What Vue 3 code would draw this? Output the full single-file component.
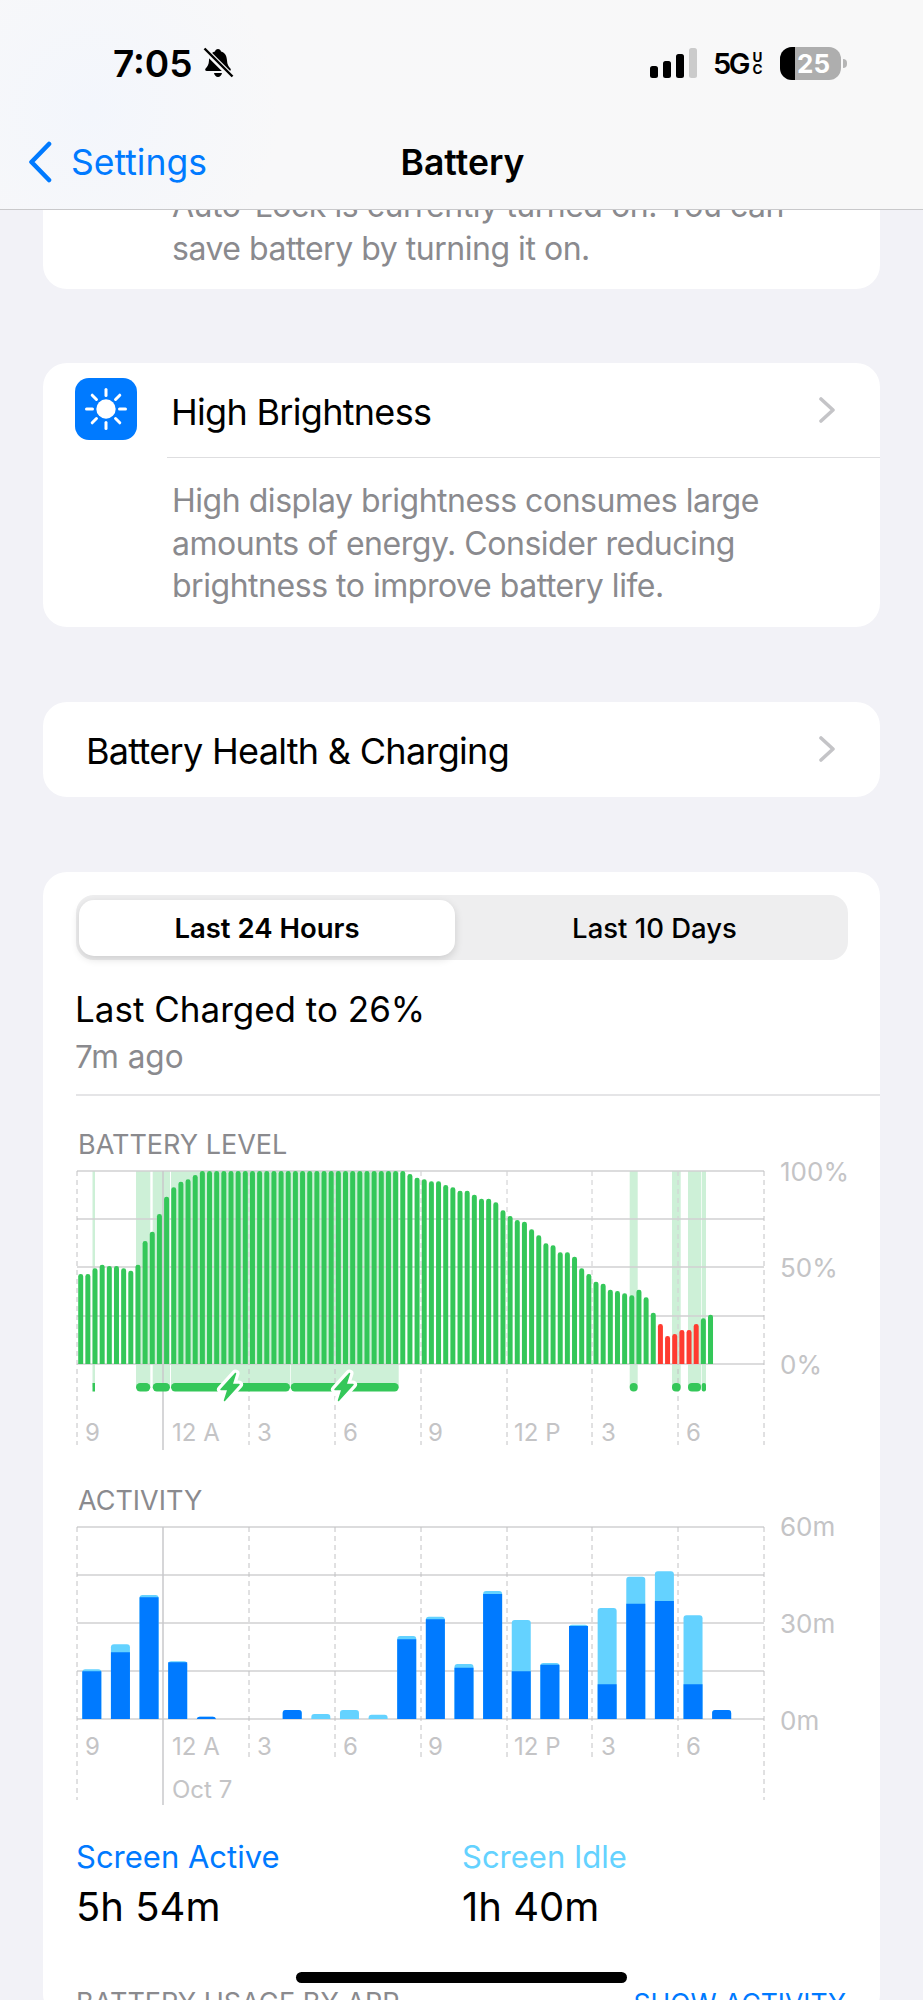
<script setup>
const levelTops = [492,492,475,464,468,468,475,482,464,393,365,312,260,232,215,208,195,
  ...Array(29).fill(183),192,203,208,214,214,225,232,242,242,254,266,266,277,301,318,330,335,358,376,400,406,427,427,440,475,492,515,521,539,543,550,556,539,562,608,642,678,672,660,660,642,625,614]
const chartFloor = 1364

function topRound(x, y, w, h, r) {
  return `M${x} ${y + h}V${y + r}Q${x} ${y} ${x + r} ${y}H${x + w - r}Q${x + w} ${y} ${x + w} ${y + r}V${y + h}Z`
}

const levelBars = levelTops.map((top, i) => {
  const y = 1110 + top / 3
  return {
    d: topRound(78.2 + i * 7.157, y, 5, chartFloor - y, 2.4),
    color: i >= 81 && i <= 86 ? '#ff3b30' : '#34c759'
  }
})

// charging stretches, x from / x to in page pixels
const bands = [[92.5, 95], [136, 150.3], [152.7, 170], [171, 290], [290.7, 398.7], [629.7, 637.7], [672, 680.7], [688, 701], [701.7, 706]]

const batteryRows = [1171, 1219, 1267, 1316, 1364]
const activityRows = [1527, 1575, 1623, 1671, 1719]
const dashed = [249, 335, 421, 507, 592, 678]

const hourLabels = [
  { x: 85, text: '9' }, { x: 172, text: '12 A' }, { x: 257, text: '3' }, { x: 343, text: '6' },
  { x: 428, text: '9' }, { x: 514, text: '12 P' }, { x: 601, text: '3' }, { x: 686, text: '6' }
]

// total top, active top (same scale as the crop), null = nothing that hour
const activity = [[598,604],[523,547],[375,382],[574,577],[740,740],null,null,[720,720],[732,748],[720,748],[734,748],[498,508],[440,448],[582,593],[363,372],[450,604],[579,584],[464,468],[414,643],[320,401],[304,393],[436,643],[720,720]]

const activityBars = activity.map((item, i) => {
  if (!item) return null
  const x = 82.3 + i * 28.63
  const totalY = 1470 + item[0] / 3
  const activeY = 1470 + item[1] / 3
  return {
    idle: topRound(x, totalY, 19, 1719 - totalY, 3),
    active: item[1] < 748 ? topRound(x, activeY, 19, 1719 - activeY, activeY - totalY < 1 ? 3 : 0) : null
  }
}).filter(Boolean)

const sunRays = [0, 45, 90, 135, 180, 225, 270, 315]
const bolt = 'M5.500 -13.500L-9 2.500H-2L-5.500 13.500L9 -2.500H2Z'
</script>

<template>
  <div class="screen">
    <header class="nav">
      <div class="status">
        <div class="status-left">
          <span class="time">7:05</span>
          <svg class="bell" width="31" height="32" viewBox="0 0 31 32">
            <path d="M15 2c1.600 0 2.700 1 3 2.400 4.200 1.200 5.800 4.700 6 9 .2 4 1.500 6 3.400 8 .9 1 .3 2.600-1.200 2.600H3.800c-1.500 0-2.100-1.600-1.200-2.600 1.900-2 3.200-4 3.400-8 .2-4.300 1.800-7.800 6-9C12.300 3 13.400 2 15 2zM11 26h8c-.3 2.300-2 4-4 4s-3.700-1.700-4-4z" fill="#000" />
            <path d="M1 2l28 28" stroke="#f8f8f8" stroke-width="6" />
            <path d="M1.500 1.500l28 28" stroke="#000" stroke-width="2.400" />
          </svg>
        </div>
        <div class="status-right">
          <svg width="47" height="30" viewBox="0 0 47 30">
            <rect x="0" y="18" width="8" height="12" rx="2.500" fill="#000" />
            <rect x="13" y="13" width="8" height="17" rx="2.500" fill="#000" />
            <rect x="26" y="6" width="8" height="24" rx="2.500" fill="#000" />
            <rect x="39" y="0" width="8" height="30" rx="2.500" fill="#cbcbcb" />
          </svg>
          <span class="network">5G</span>
          <span class="uc"><span>U</span><span>C</span></span>
          <span class="battery"><span class="battery-fill"></span><span class="battery-num">25</span></span>
          <span class="battery-nub"></span>
        </div>
      </div>
      <div class="bar">
        <div class="back">
          <svg width="24" height="42" viewBox="0 0 24 42">
            <path d="M21 3L3.500 21 21 39" fill="none" stroke="#007aff" stroke-width="4.600" stroke-linecap="round" stroke-linejoin="round" />
          </svg>
          <span>Settings</span>
        </div>
        <div class="title">Battery</div>
      </div>
    </header>

    <main class="page">
      <section class="card first">
        <p class="desc">Auto-Lock is currently turned on. You can<br />save battery by turning it on.</p>
      </section>

      <section class="card">
        <div class="row-icon">
          <div class="icon">
            <svg width="62" height="62" viewBox="0 0 62 62">
              <circle cx="31" cy="31" r="9.700" fill="#fff" />
              <path
                v-for="a in sunRays"
                :key="a"
                d="M31 11.500v6"
                stroke="#fff"
                stroke-width="3"
                stroke-linecap="round"
                :transform="`rotate(${a} 31 31)`"
              />
            </svg>
          </div>
          <div class="row-main">
            <span class="label">High Brightness</span>
            <svg class="chevron" width="18" height="26" viewBox="0 0 18 26">
              <path d="M3 2l12 11L3 24" fill="none" stroke="#c4c4c7" stroke-width="3.600" stroke-linecap="round" stroke-linejoin="round" />
            </svg>
          </div>
        </div>
        <p class="desc second">High display brightness consumes large<br />amounts of energy. Consider reducing<br />brightness to improve battery life.</p>
      </section>

      <section class="card health">
        <span class="label">Battery Health &amp; Charging</span>
        <svg class="chevron" width="18" height="26" viewBox="0 0 18 26">
          <path d="M3 2l12 11L3 24" fill="none" stroke="#c4c4c7" stroke-width="3.600" stroke-linecap="round" stroke-linejoin="round" />
        </svg>
      </section>

      <section class="card usage">
        <div class="segments">
          <div class="segment on">Last 24 Hours</div>
          <div class="segment off">Last 10 Days</div>
        </div>
        <div class="charged">Last Charged to 26%</div>
        <div class="ago">7m ago</div>
        <div class="rule"></div>

        <div class="chart-title level-title">BATTERY LEVEL</div>
        <svg class="chart level-chart" width="837" height="300" viewBox="43 1155 837 300">
          <g fill="#cdf0d7">
            <rect v-for="b in bands" :key="b[0]" :x="b[0]" y="1171" :width="b[1] - b[0]" height="216" />
          </g>
          <path v-for="y in batteryRows" :key="y" :d="`M77 ${y}H764`" class="grid" />
          <path d="M77 1171V1445M764 1171V1445" class="dash" />
          <path v-for="x in dashed" :key="x" :d="`M${x} 1171V1445`" class="dash" />
          <path d="M163 1171V1450" class="solid" />
          <path v-for="(bar, i) in levelBars" :key="i" :d="bar.d" :fill="bar.color" />
          <path v-for="x in dashed" :key="x" :d="`M${x} 1171V1364`" class="dash-over" />
          <g fill="#34c759">
            <rect x="92.500" y="1383" width="2.500" height="8.500" />
            <rect x="136" y="1383" width="14.300" height="8.500" rx="4.200" />
            <rect x="152.700" y="1383" width="17.300" height="8.500" rx="4.200" />
            <rect x="171" y="1383" width="119" height="8.500" rx="4.200" />
            <rect x="290.700" y="1383" width="108" height="8.500" rx="4.200" />
            <rect x="629.700" y="1383" width="8" height="8.500" rx="4" />
            <rect x="672" y="1383" width="8.700" height="8.500" rx="4" />
            <rect x="688" y="1383" width="13" height="8.500" rx="4" />
            <rect x="701.700" y="1383" width="4.300" height="8.500" rx="2" />
          </g>
          <g v-for="cx in [230, 344]" :key="cx" :transform="`translate(${cx} 1387)`">
            <path :d="bolt" fill="#fff" stroke="#fff" stroke-width="8" stroke-linejoin="round" />
            <path :d="bolt" fill="#34c759" stroke="#34c759" stroke-width="1.500" stroke-linejoin="round" />
          </g>
          <text v-for="l in hourLabels" :key="l.x" :x="l.x" y="1441" class="axis">{{ l.text }}</text>
          <text x="780" y="1181" class="axis side">100%</text>
          <text x="780" y="1277" class="axis side">50%</text>
          <text x="780" y="1374" class="axis side">0%</text>
        </svg>

        <div class="chart-title activity-title">ACTIVITY</div>
        <svg class="chart activity-chart" width="837" height="300" viewBox="43 1510 837 300">
          <path v-for="y in activityRows" :key="y" :d="`M77 ${y}H764`" class="grid" />
          <path d="M77 1527V1800M764 1527V1800" class="dash" />
          <path v-for="x in dashed" :key="x" :d="`M${x} 1527V1758`" class="dash" />
          <path d="M163 1527V1805" class="solid" />
          <g v-for="(bar, i) in activityBars" :key="i">
            <path :d="bar.idle" fill="#64d2ff" />
            <path v-if="bar.active" :d="bar.active" fill="#007aff" />
          </g>
          <text v-for="l in hourLabels" :key="l.x" :x="l.x" y="1755" class="axis">{{ l.text }}</text>
          <text x="172" y="1798" class="axis">Oct 7</text>
          <text x="780" y="1536" class="axis side">60m</text>
          <text x="780" y="1633" class="axis side">30m</text>
          <text x="780" y="1730" class="axis side">0m</text>
        </svg>

        <div class="stats">
          <div class="stat">
            <div class="stat-label active">Screen Active</div>
            <div class="stat-value">5h 54m</div>
          </div>
          <div class="stat">
            <div class="stat-label idle">Screen Idle</div>
            <div class="stat-value">1h 40m</div>
          </div>
        </div>

        <div class="usage-head">
          <span>BATTERY USAGE BY APP</span>
          <span class="show">SHOW ACTIVITY</span>
        </div>
      </section>
    </main>

    <div class="home"></div>
  </div>
</template>

<style>
body {
  background: #f2f2f7;
}
</style>

<style scoped>
.screen {
  position: relative;
  width: 923px;
  height: 2000px;
  overflow: hidden;
  background: #f2f2f7;
  font-family: Inter, "Liberation Sans", sans-serif;
  color: #000;
}

.nav {
  position: absolute;
  top: 0;
  left: 0;
  right: 0;
  z-index: 2;
  height: 209px;
  border-bottom: 1px solid #c9c9cb;
  background: radial-gradient(circle at 90px 110px, #f3f6fc 0, #f8f8f9 190px, #f8f8f8 100%);
}

.status {
  display: flex;
  align-items: center;
  justify-content: space-between;
  height: 126px;
  padding: 0 76px 0 113px;
}

.status-left {
  display: flex;
  align-items: center;
  gap: 10px;
}

.time {
  font-size: 37px;
  font-weight: 600;
}

.status-right {
  display: flex;
  align-items: center;
}

.network {
  width: 34px;
  margin-left: 16px;
  font-size: 29px;
  font-weight: 600;
  letter-spacing: -2.500px;
}

.uc {
  display: flex;
  flex-direction: column;
  align-items: center;
  width: 11px;
  margin-left: 5px;
  font-size: 13.500px;
  font-weight: 700;
  line-height: 12px;
}

.battery {
  position: relative;
  display: flex;
  align-items: center;
  justify-content: center;
  overflow: hidden;
  width: 61px;
  height: 33px;
  margin-left: 17px;
  border-radius: 12px;
  background: #aeaeae;
}

.battery-fill {
  position: absolute;
  top: 0;
  bottom: 0;
  left: 0;
  width: 15px;
  background: #000;
}

.battery-num {
  position: relative;
  margin-left: 6px;
  color: #fff;
  font-size: 26px;
  font-weight: 700;
}

.battery-nub {
  width: 4px;
  height: 9px;
  margin-left: 2px;
  border-radius: 0 4px 4px 0;
  background: #b5b5b5;
}

.bar {
  display: grid;
  grid-template-columns: 1fr auto 1fr;
  align-items: center;
  height: 72px;
  padding-left: 28px;
  padding-right: 26px;
}

.back {
  display: flex;
  align-items: center;
  gap: 19px;
  color: #007aff;
  font-size: 35.500px;
}

.title {
  font-size: 35.500px;
  font-weight: 600;
}

.page {
  padding: 130px 43px 0;
}

.card {
  margin-bottom: 75px;
  border-radius: 24px;
  background: #fff;
}

.first {
  margin-bottom: 74px;
  padding: 55px 0 19px;
}

.desc {
  margin: 0;
  padding-left: 129px;
  color: #8a8a8e;
  font-size: 32px;
  letter-spacing: -0.470px;
  line-height: 42.500px;
}

.second {
  padding-top: 22px;
  padding-bottom: 19px;
}

.row-icon {
  display: flex;
  align-items: flex-start;
}

.icon {
  width: 62px;
  height: 62px;
  margin: 15px 0 0 32px;
  border-radius: 14px;
  background: #007aff;
}

.icon svg {
  display: block;
}

.row-main {
  display: flex;
  flex: 1;
  align-items: center;
  justify-content: space-between;
  height: 95px;
  margin-left: 30px;
  padding: 0 44px 0 4px;
  border-bottom: 1.500px solid #dedee0;
  box-sizing: border-box;
}

.label {
  padding-top: 4px;
  font-size: 36px;
  letter-spacing: -0.700px;
}

.health {
  display: flex;
  align-items: center;
  justify-content: space-between;
  height: 95px;
  padding: 0 44px 0 43px;
}

.usage {
  margin-bottom: 0;
  padding-top: 23px;
}

.segments {
  display: flex;
  box-sizing: border-box;
  width: 772px;
  height: 65px;
  margin-left: 33px;
  padding: 5px 3px 4px;
  border-radius: 18px;
  background: #eeeeef;
}

.segment {
  display: flex;
  flex: 1;
  align-items: center;
  justify-content: center;
  font-size: 27.500px;
  font-weight: 500;
}

.off {
  padding-left: 9px;
}

.segment.on {
  flex: 0 0 376px;
  border-radius: 15px;
  background: #fff;
  box-shadow: 0 3px 8px rgba(0, 0, 0, 0.14);
  font-weight: 600;
}

.charged {
  margin: 24px 0 0 32px;
  font-size: 35px;
  line-height: 50px;
}

.ago {
  margin-left: 32px;
  color: #8a8a8e;
  font-size: 31.500px;
  line-height: 45px;
}

.rule {
  height: 2px;
  margin: 15px 0 0 33px;
  background: #e5e5e7;
}

.chart-title {
  margin-left: 35px;
  color: #8a8a8e;
  font-size: 27px;
  line-height: 30px;
}

.level-title {
  margin-top: 34px;
}

.activity-title {
  margin-top: 31px;
}

.chart {
  display: block;
}

.level-chart {
  margin-top: -5px;
}

.activity-chart {
  margin-top: -6px;
}

.grid {
  fill: none;
  stroke: #d0d0d2;
  stroke-width: 1.500;
}

.dash {
  fill: none;
  stroke: #c2c2c4;
  stroke-width: 1;
  stroke-dasharray: 5 4;
}

.dash-over {
  fill: none;
  stroke: #fff;
  stroke-opacity: 0.35;
  stroke-width: 1;
  stroke-dasharray: 5 4;
}

.solid {
  fill: none;
  stroke: #c9c9cb;
  stroke-width: 1.500;
}

.axis {
  fill: #c4c4c6;
  font-size: 24px;
}

.side {
  font-size: 26px;
}

.stats {
  display: grid;
  grid-template-columns: 386px 1fr;
  margin: 27px 0 0 33px;
}

.stat-label {
  font-size: 31px;
  line-height: 40px;
}

.active {
  color: #007aff;
}

.idle {
  color: #64d2ff;
}

.stat-value {
  font-size: 40px;
  line-height: 60px;
}

.usage-head {
  display: flex;
  justify-content: space-between;
  margin: 51px 34px 0 33px;
  color: #8a8a8e;
  font-size: 27px;
  line-height: 30px;
}

.show {
  color: #007aff;
  font-size: 26.500px;
}

.home {
  position: absolute;
  left: 296px;
  bottom: 17px;
  z-index: 3;
  width: 331px;
  height: 11px;
  border-radius: 6px;
  background: #000;
}
</style>
